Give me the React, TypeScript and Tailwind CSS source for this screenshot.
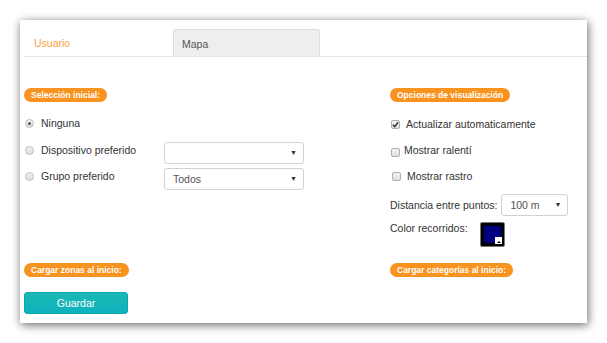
import React from 'react';

function Badge({ children }: { children: React.ReactNode }) {
  return (
    <div className="flex">
      <span className="flex h-[14px] items-center rounded-full bg-[#f7931e] px-[7px] text-[8.5px] font-bold leading-none text-white">
        {children}
      </span>
    </div>
  );
}

function Radio({ checked = false }: { checked?: boolean }) {
  return (
    <span className="flex h-[9px] w-[9px] shrink-0 items-center justify-center rounded-full border border-[#bdbdbd] bg-gradient-to-b from-[#f4f4f4] to-[#dcdcdc]">
      {checked && <span className="h-[3px] w-[3px] rounded-full bg-[#555]" />}
    </span>
  );
}

function Checkbox({ checked = false }: { checked?: boolean }) {
  return (
    <span className="flex h-[9px] w-[9px] shrink-0 items-center justify-center rounded-[2px] border border-[#b0b0b0] bg-gradient-to-b from-[#f4f4f4] to-[#dedede]">
      {checked && (
        <svg width="7" height="7" viewBox="0 0 8 8">
          <path d="M1 4.2 L3.1 6.4 L7 1.4" fill="none" stroke="#333" strokeWidth="1.6" />
        </svg>
      )}
    </span>
  );
}

function Select({ value, width }: { value?: string; width: string }) {
  return (
    <div className={`flex h-[22px] ${width} shrink-0 items-center justify-between rounded-[3px] border border-[#d2d2d2] bg-white pl-[8px] pr-[6px] text-[10.5px] text-[#555]`}>
      <span>{value}</span>
      <span className="text-[7px] text-[#333]">▼</span>
    </div>
  );
}

export default function App() {
  return (
    <div className="h-[343px] w-[607px] bg-white pl-[20px] pt-[20px] font-['Liberation_Sans',Arial,sans-serif] text-[10.5px] leading-[16px] text-[#333]">
      <div className="h-[303px] w-[567px] bg-white pl-[4px] pt-[9px] shadow-[1px_2px_9px_rgba(0,0,0,0.6)]">
        {/* Tabs */}
        <div className="flex h-[28px] border-b border-[#e3e3e3]">
          <div className="flex w-[149px] items-center pl-[10px] pt-[1px] text-[#f9a040]">Usuario</div>
          <div className="flex w-[147px] items-center rounded-t-[3px] border border-b-0 border-[#dcdcdc] bg-[#eeeeee] pl-[8px] pt-[1px] text-[#555]">
            Mapa
          </div>
        </div>

        <div className="grid grid-cols-[366px_1fr] items-start pt-[31px]">
          {/* Left column */}
          <div className="flex flex-col">
            <Badge>Selección inicial:</Badge>
            <div className="mt-[11px] flex h-[20px] items-center gap-[7px] pl-[1px]">
              <Radio checked />
              <span>Ninguna</span>
            </div>
            <div className="mt-[9px] flex h-[22px] items-start">
              <div className="flex h-[16px] w-[140px] items-center gap-[7px] pl-[1px]">
                <Radio />
                <span>Dispositivo preferido</span>
              </div>
              <Select width="w-[140px]" />
            </div>
            <div className="mt-[4px] flex h-[22px] items-start">
              <div className="flex h-[16px] w-[140px] items-center gap-[7px] pl-[1px]">
                <Radio />
                <span>Grupo preferido</span>
              </div>
              <Select value="Todos" width="w-[140px]" />
            </div>
            <div className="mt-[73px]">
              <Badge>Cargar zonas al inicio:</Badge>
            </div>
            <div className="mt-[15px] flex">
              <button className="flex h-[22px] w-[104px] items-center justify-center rounded-[3px] border border-[#0fa3aa] bg-gradient-to-b from-[#1ab8b4] to-[#0eb1bf] text-[10.5px] text-white">
                Guardar
              </button>
            </div>
          </div>

          {/* Right column */}
          <div className="flex flex-col">
            <Badge>Opciones de visualización</Badge>
            <div className="mt-[12px] flex h-[20px] items-center gap-[6px] pl-[1px]">
              <Checkbox checked />
              <span>Actualizar automaticamente</span>
            </div>
            <div className="mt-[6px] flex h-[20px] items-center gap-[4px] pl-[1px]">
              <span className="mt-[4px] flex"><Checkbox /></span>
              <span>Mostrar ralentí</span>
            </div>
            <div className="mt-[6px] flex h-[20px] items-center gap-[6px] pl-[2px]">
              <Checkbox />
              <span>Mostrar rastro</span>
            </div>
            <div className="mt-[8px] flex h-[22px] items-center gap-[4px]">
              <span className="whitespace-nowrap">Distancia entre puntos:</span>
              <Select value="100 m" width="w-[67px]" />
            </div>
            <div className="mt-[4px] flex items-start">
              <span className="w-[90px] whitespace-nowrap">Color recorridos:</span>
              <div className="relative mt-[2px] h-[25px] w-[25px] rounded-[2px] border border-[#777] bg-black p-[3px]">
                <div className="h-full w-full bg-[#000080]" />
                <span className="absolute bottom-[2px] right-[2px] flex h-[7px] w-[7px] items-end justify-center bg-white">
                  <span className="mb-[1px] h-0 w-0 border-x-[2px] border-b-[2px] border-x-transparent border-b-black" />
                </span>
              </div>
            </div>
            <div className="mt-[16px]">
              <Badge>Cargar categorías al inicio:</Badge>
            </div>
          </div>
        </div>
      </div>
    </div>
  );
}
